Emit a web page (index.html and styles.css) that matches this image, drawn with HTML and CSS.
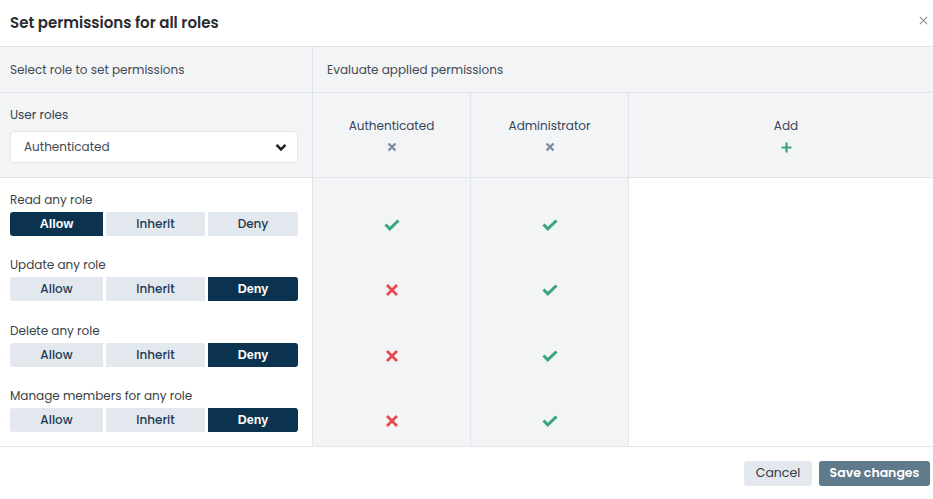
FILE: index.html
```html
<!DOCTYPE html>
<html lang="en">
<head>
<meta charset="utf-8">
<title>Set permissions for all roles</title>
<link rel="stylesheet" href="styles.css">
</head>
<body>
<div class="modal">
  <div class="modal-head">
    <h1 class="title">Set permissions for all roles</h1>
    <button class="close" aria-label="Close">
      <svg width="9" height="9" viewBox="0 0 10 10"><path d="M1 1L9 9M9 1L1 9" stroke="#8a8f96" stroke-width="1.3" fill="none"/></svg>
    </button>
  </div>
  <div class="grid">
    <div class="sub sub-left">Select role to set permissions</div>
    <div class="sub sub-right">Evaluate applied permissions</div>

    <div class="roles-cell">
      <div class="label">User roles</div>
      <div class="select">
        <span>Authenticated</span>
        <svg width="12" height="9" viewBox="0 0 12 9"><path d="M1.5 1.8L6 6.3L10.5 1.8" stroke="#1f2428" stroke-width="2.6" fill="none"/></svg>
      </div>
    </div>
    <div class="role-head col">
      <div class="role-name">Authenticated</div>
      <svg class="rm" width="10" height="10" viewBox="0 0 10 10"><path d="M1.5 1.5L8.5 8.5M8.5 1.5L1.5 8.5" stroke="#7b8c9b" stroke-width="2.3" fill="none"/></svg>
    </div>
    <div class="role-head col">
      <div class="role-name">Administrator</div>
      <svg class="rm" width="10" height="10" viewBox="0 0 10 10"><path d="M1.5 1.5L8.5 8.5M8.5 1.5L1.5 8.5" stroke="#7b8c9b" stroke-width="2.3" fill="none"/></svg>
    </div>
    <div class="role-head add">
      <div class="role-name">Add</div>
      <svg class="rm" width="11" height="11" viewBox="0 0 11 11"><path d="M5.5 0.5V10.5M0.5 5.5H10.5" stroke="#3aa57c" stroke-width="2.2" fill="none"/></svg>
    </div>

    <div class="perm">
      <div class="perm-label">Read any role</div>
      <div class="seg"><span class="opt on">Allow</span><span class="opt">Inherit</span><span class="opt">Deny</span></div>
    </div>
    <div class="res col"><svg class="ic" width="16" height="12" viewBox="0 0 16 12"><path d="M1.5 5.5L5.8 9.8L14.5 1.5" stroke="#3aa57c" stroke-width="3" fill="none"/></svg></div>
    <div class="res col"><svg class="ic" width="16" height="12" viewBox="0 0 16 12"><path d="M1.5 5.5L5.8 9.8L14.5 1.5" stroke="#3aa57c" stroke-width="3" fill="none"/></svg></div>
    <div class="res blank"></div>

    <div class="perm">
      <div class="perm-label">Update any role</div>
      <div class="seg"><span class="opt">Allow</span><span class="opt">Inherit</span><span class="opt on">Deny</span></div>
    </div>
    <div class="res col"><svg class="ic" width="16" height="12" viewBox="0 0 16 12"><path d="M3 1L13 11M13 1L3 11" stroke="#e5484d" stroke-width="2.8" fill="none"/></svg></div>
    <div class="res col"><svg class="ic" width="16" height="12" viewBox="0 0 16 12"><path d="M1.5 5.5L5.8 9.8L14.5 1.5" stroke="#3aa57c" stroke-width="3" fill="none"/></svg></div>
    <div class="res blank"></div>

    <div class="perm">
      <div class="perm-label">Delete any role</div>
      <div class="seg"><span class="opt">Allow</span><span class="opt">Inherit</span><span class="opt on">Deny</span></div>
    </div>
    <div class="res col"><svg class="ic" width="16" height="12" viewBox="0 0 16 12"><path d="M3 1L13 11M13 1L3 11" stroke="#e5484d" stroke-width="2.8" fill="none"/></svg></div>
    <div class="res col"><svg class="ic" width="16" height="12" viewBox="0 0 16 12"><path d="M1.5 5.5L5.8 9.8L14.5 1.5" stroke="#3aa57c" stroke-width="3" fill="none"/></svg></div>
    <div class="res blank"></div>

    <div class="perm">
      <div class="perm-label">Manage members for any role</div>
      <div class="seg"><span class="opt">Allow</span><span class="opt">Inherit</span><span class="opt on">Deny</span></div>
    </div>
    <div class="res col"><svg class="ic" width="16" height="12" viewBox="0 0 16 12"><path d="M3 1L13 11M13 1L3 11" stroke="#e5484d" stroke-width="2.8" fill="none"/></svg></div>
    <div class="res col"><svg class="ic" width="16" height="12" viewBox="0 0 16 12"><path d="M1.5 5.5L5.8 9.8L14.5 1.5" stroke="#3aa57c" stroke-width="3" fill="none"/></svg></div>
    <div class="res blank"></div>
  </div>
  <div class="footer">
    <button class="btn cancel">Cancel</button>
    <button class="btn save">Save changes</button>
  </div>
</div>
</body>
</html>
```

FILE: styles.css
```css
* { box-sizing: border-box; }
html, body { margin: 0; padding: 0; background: #fff; }
body {
  font-family: "Poppins", "Open Sans", "Noto Sans", sans-serif;
  color: #333;
  width: 933px;
  height: 499px;
  overflow: hidden;
}
.modal { width: 933px; }
.modal-head {
  height: 47px;
  border-bottom: 1px solid #e1e4e8;
  display: flex;
  align-items: center;
  justify-content: space-between;
  padding: 0 4px 2px 10px;
}
.title {
  margin: 0;
  font-size: 15px;
  font-weight: 600;
  color: #2a2c30;
}
.close {
  border: 0;
  background: none;
  padding: 0;
  width: 12px;
  height: 12px;
  display: flex;
  align-items: center;
  justify-content: center;
  margin-bottom: 4px;
}
.grid {
  display: grid;
  grid-template-columns: 313px 158px 158px 1fr;
  grid-template-rows: 46px 85px 65px 66px 65px 72px;
  border-bottom: 1px solid #e1e4e8;
}
.sub {
  background: #f3f4f6;
  border-bottom: 1px solid #e1e4e8;
  display: flex;
  align-items: center;
  font-size: 12px;
  color: #444a52;
}
.sub-left { padding-left: 10px; border-right: 1px solid #e1e4e8; }
.sub-right { grid-column: 2 / 5; padding-left: 14px; }
.roles-cell {
  background: #f3f4f6;
  border-right: 1px solid #e1e4e8;
  border-bottom: 1px solid #e1e4e8;
  padding: 13px 14px 0 10px;
}
.label { font-size: 12px; color: #2e4255; line-height: 18px; }
.select {
  margin-top: 7px;
  height: 32px;
  background: #fff;
  border: 1px solid #e4e7eb;
  border-radius: 4px;
  display: flex;
  align-items: center;
  justify-content: space-between;
  padding: 0 10px 0 13px;
  font-size: 12px;
  color: #43484f;
}
.role-head {
  background: #f3f4f6;
  border-bottom: 1px solid #e1e4e8;
  display: flex;
  flex-direction: column;
  align-items: center;
  padding-top: 24px;
}
.role-head.col { border-right: 1px solid #e1e4e8; }
.role-head.add { padding-left: 10px; }
.role-name { font-size: 12px; color: #33475b; line-height: 18px; }
.rm { margin-top: 7px; }
.perm {
  border-right: 1px solid #e1e4e8;
  padding: 13px 14px 0 10px;
}
.perm-label { font-size: 12px; color: #3a3f46; line-height: 18px; }
.seg {
  margin-top: 3px;
  display: grid;
  grid-template-columns: 93px 99px 90px;
  gap: 3px;
}
.opt {
  height: 24px;
  background: #e3e8ef;
  display: flex;
  align-items: center;
  justify-content: center;
  font-size: 12px;
  font-weight: 500;
  color: #1f3a52;
}
.opt:first-child { border-radius: 3px 0 0 3px; }
.opt:last-child { border-radius: 0 3px 3px 0; }
.opt.on {
  background: #0b334f;
  color: #fff;
  font-family: "Liberation Sans", Arial, sans-serif;
  font-weight: 700;
  font-size: 12.5px;
}
.res {
  display: flex;
  justify-content: center;
  padding-top: 41px;
}
.res.col { background: #f3f4f6; border-right: 1px solid #e1e4e8; }
.ic { display: block; }
.footer {
  height: 52px;
  display: flex;
  justify-content: flex-end;
  align-items: center;
  gap: 7px;
  padding: 0 3px 0 0;
}
.btn {
  height: 25px;
  border: 0;
  border-radius: 3px;
  font-family: inherit;
  font-size: 12.5px;
  padding: 0;
  white-space: nowrap;
}
.cancel { background: #e3e8ef; color: #333a42; width: 68px; }
.save { background: #5f7a8b; color: #fff; font-weight: 600; width: 111px; }
```
